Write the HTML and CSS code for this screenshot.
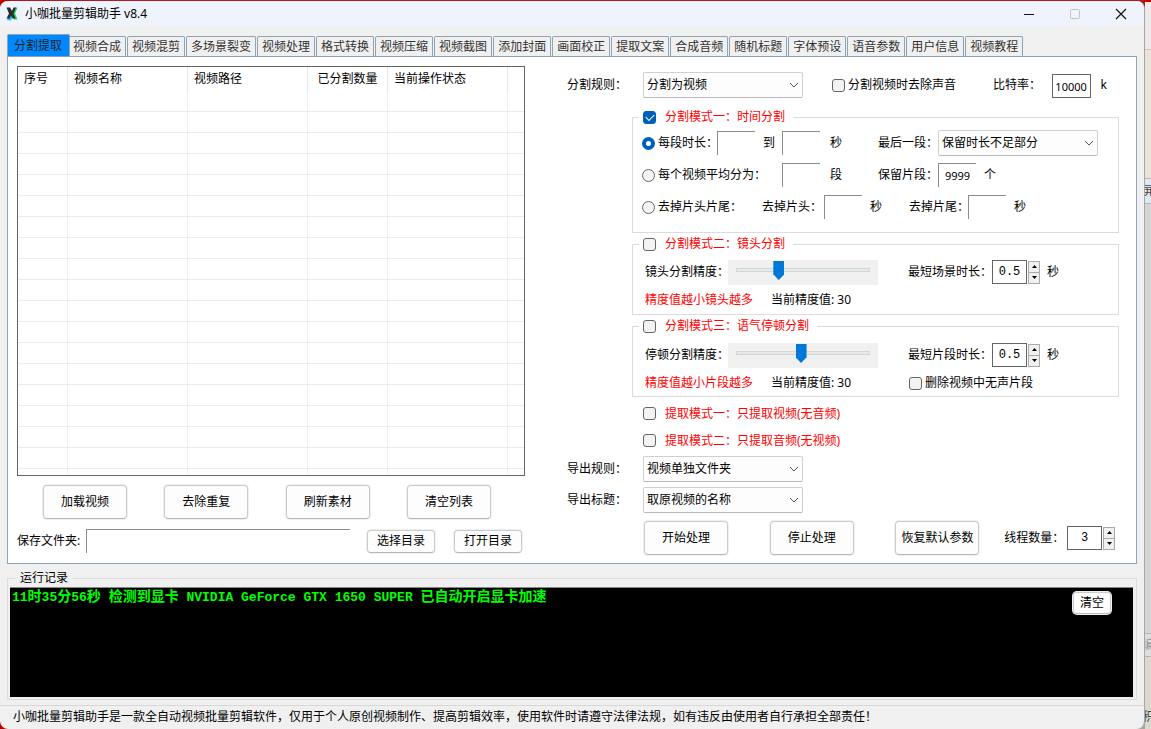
FILE: index.html
```html
<!DOCTYPE html>
<html lang="zh-CN">
<head>
<meta charset="utf-8">
<title>小咖批量剪辑助手 v8.4</title>
<link rel="stylesheet" href="styles.css">
</head>
<body>
<main class="window">
  <header class="titlebar">
    <svg class="app-icon" width="12" height="14" viewBox="0 0 12 14" aria-hidden="true">
      <path d="M9.500 0.500H11.500L9 6.500L11.500 12.500H8L6.500 8Z" fill="#1fd655"/>
      <path d="M1 13L3.500 9H6.500L5 13.500Z" fill="#19bdf2"/>
      <path d="M0.500 0.500H4L6 4L7.500 0.500H10L7.500 6.500L9.500 11.500H6.500L5 8.500L3.500 11.500H0.500L3 6.500Z" fill="#2a2d31"/>
    </svg>
    <h1 class="title">小咖批量剪辑助手 v8.4</h1>
    <button class="win-btn" aria-label="最小化"><svg width="12" height="12" viewBox="0 0 12 12"><path d="M1 6.500H11" stroke="#111"/></svg></button>
    <button class="win-btn" aria-label="最大化" disabled><svg width="12" height="12" viewBox="0 0 12 12"><rect x="1.500" y="1.500" width="9" height="9" rx="1" fill="none" stroke="#c0c3c9"/></svg></button>
    <button class="win-btn" aria-label="关闭"><svg width="12" height="12" viewBox="0 0 12 12"><path d="M1 1L11 11M11 1L1 11" stroke="#111" stroke-width="1.200"/></svg></button>
  </header>

  <nav class="tabs" role="tablist">
    <button class="tab tab-active" role="tab" aria-selected="true">分割提取</button>
    <button class="tab" role="tab">视频合成</button>
    <button class="tab" role="tab">视频混剪</button>
    <button class="tab" role="tab">多场景裂变</button>
    <button class="tab" role="tab">视频处理</button>
    <button class="tab" role="tab">格式转换</button>
    <button class="tab" role="tab">视频压缩</button>
    <button class="tab" role="tab">视频截图</button>
    <button class="tab" role="tab">添加封面</button>
    <button class="tab" role="tab">画面校正</button>
    <button class="tab" role="tab">提取文案</button>
    <button class="tab" role="tab">合成音频</button>
    <button class="tab" role="tab">随机标题</button>
    <button class="tab" role="tab">字体预设</button>
    <button class="tab" role="tab">语音参数</button>
    <button class="tab" role="tab">用户信息</button>
    <button class="tab" role="tab">视频教程</button>
  </nav>

  <section class="panel">
    <div class="left">
      <div class="list">
        <table class="files">
          <colgroup><col class="c-no"><col class="c-name"><col class="c-name"><col class="c-count"><col class="c-name"><col></colgroup>
          <thead><tr><th>序号</th><th>视频名称</th><th>视频路径</th><th class="center">已分割数量</th><th>当前操作状态</th><th></th></tr></thead>
          <tbody>
            <tr><td></td><td></td><td></td><td></td><td></td><td></td></tr>
            <tr><td></td><td></td><td></td><td></td><td></td><td></td></tr>
            <tr><td></td><td></td><td></td><td></td><td></td><td></td></tr>
            <tr><td></td><td></td><td></td><td></td><td></td><td></td></tr>
            <tr><td></td><td></td><td></td><td></td><td></td><td></td></tr>
            <tr><td></td><td></td><td></td><td></td><td></td><td></td></tr>
            <tr><td></td><td></td><td></td><td></td><td></td><td></td></tr>
            <tr><td></td><td></td><td></td><td></td><td></td><td></td></tr>
            <tr><td></td><td></td><td></td><td></td><td></td><td></td></tr>
            <tr><td></td><td></td><td></td><td></td><td></td><td></td></tr>
            <tr><td></td><td></td><td></td><td></td><td></td><td></td></tr>
            <tr><td></td><td></td><td></td><td></td><td></td><td></td></tr>
            <tr><td></td><td></td><td></td><td></td><td></td><td></td></tr>
            <tr><td></td><td></td><td></td><td></td><td></td><td></td></tr>
            <tr><td></td><td></td><td></td><td></td><td></td><td></td></tr>
            <tr><td></td><td></td><td></td><td></td><td></td><td></td></tr>
            <tr><td></td><td></td><td></td><td></td><td></td><td></td></tr>
            <tr><td></td><td></td><td></td><td></td><td></td><td></td></tr>
            <tr class="tail"><td></td><td></td><td></td><td></td><td></td><td></td></tr>
          </tbody>
        </table>
      </div>
      <div class="list-actions">
        <button class="btn btn-big">加载视频</button>
        <button class="btn btn-big">去除重复</button>
        <button class="btn btn-big">刷新素材</button>
        <button class="btn btn-big">清空列表</button>
      </div>
      <div class="folder">
        <label for="folder">保存文件夹:</label>
        <input class="edge folder-path" id="folder" type="text">
        <button class="btn btn-small">选择目录</button>
        <button class="btn btn-small">打开目录</button>
      </div>
    </div>

    <div class="right">
      <div class="form-row">
        <label for="split-rule">分割规则：</label>
        <div class="rule-fields">
          <span class="combo"><select id="split-rule"><option>分割为视频</option></select><svg width="10" height="6" viewBox="0 0 10 6"><path d="M1 1L5 5L9 1"/></svg></span>
          <label class="choice"><input type="checkbox">分割视频时去除声音</label>
          <span class="bitrate"><label for="bitrate">比特率：</label><input class="boxed" id="bitrate" type="text" value="10000"><span>k</span></span>
        </div>
      </div>

      <fieldset class="group group-time">
        <legend><label class="choice-wide"><input type="checkbox" checked>分割模式一：时间分割</label></legend>
        <div class="row pair">
          <div class="time-cells">
            <label class="choice"><input type="radio" name="mode" checked>每段时长：</label>
            <input class="edge" type="text" aria-label="最短时长">
            <input class="edge third" type="text" aria-label="最长时长">
            <span class="between">到</span>
            <span class="unit">秒</span>
          </div>
          <div class="field"><label for="last">最后一段：</label><span class="combo"><select id="last"><option>保留时长不足部分</option></select><svg width="10" height="6" viewBox="0 0 10 6"><path d="M1 1L5 5L9 1"/></svg></span></div>
        </div>
        <div class="row pair">
          <div class="time-cells">
            <label class="choice wide"><input type="radio" name="mode">每个视频平均分为：</label>
            <input class="edge third" type="text" aria-label="平均段数">
            <span class="unit">段</span>
          </div>
          <div class="field"><label for="keep">保留片段：</label><input class="edge" id="keep" type="text" value="9999"><span class="after">个</span></div>
        </div>
        <div class="row trim">
          <label class="choice"><input type="radio" name="mode">去掉片头片尾：</label>
          <label for="head">去掉片头：</label><input class="edge" id="head" type="text"><span class="after">秒</span>
          <label for="end">去掉片尾：</label><input class="edge" id="end" type="text"><span class="after">秒</span>
        </div>
      </fieldset>

      <fieldset class="group group-shot">
        <legend><label class="choice-wide"><input type="checkbox">分割模式二：镜头分割</label></legend>
        <div class="row tuning">
          <label for="shot">镜头分割精度：</label>
          <input id="shot" type="range" min="0" max="100" value="30">
          <div class="duration"><label for="scene">最短场景时长：</label><span class="spin"><input class="boxed" id="scene" type="text" value="0.5"><span class="arrows"><button aria-label="增加"><svg width="5" height="3" viewBox="0 0 5 3"><path d="M0 3L2.500 0L5 3Z"/></svg></button><button aria-label="减少"><svg width="5" height="3" viewBox="0 0 5 3"><path d="M0 0L2.500 3L5 0Z"/></svg></button></span></span><span>秒</span></div>
        </div>
        <div class="row notes"><span class="red">精度值越小镜头越多</span><output for="shot">当前精度值: 30</output></div>
      </fieldset>

      <fieldset class="group group-pause">
        <legend><label class="choice-wide"><input type="checkbox">分割模式三：语气停顿分割</label></legend>
        <div class="row tuning">
          <label for="pause">停顿分割精度：</label>
          <input id="pause" type="range" min="0" max="62" value="30">
          <div class="duration"><label for="clip">最短片段时长：</label><span class="spin"><input class="boxed" id="clip" type="text" value="0.5"><span class="arrows"><button aria-label="增加"><svg width="5" height="3" viewBox="0 0 5 3"><path d="M0 3L2.500 0L5 3Z"/></svg></button><button aria-label="减少"><svg width="5" height="3" viewBox="0 0 5 3"><path d="M0 0L2.500 3L5 0Z"/></svg></button></span></span><span>秒</span></div>
        </div>
        <div class="row notes"><span class="red">精度值越小片段越多</span><output for="pause">当前精度值: 30</output><label class="choice"><input type="checkbox">删除视频中无声片段</label></div>
      </fieldset>

      <div class="extract">
        <label class="choice-wide"><input type="checkbox">提取模式一：只提取视频(无音频)</label>
        <label class="choice-wide"><input type="checkbox">提取模式二：只提取音频(无视频)</label>
      </div>
      <div class="exports">
        <div class="form-row">
          <label for="export-rule">导出规则：</label>
          <span class="combo"><select id="export-rule"><option>视频单独文件夹</option></select><svg width="10" height="6" viewBox="0 0 10 6"><path d="M1 1L5 5L9 1"/></svg></span>
        </div>
        <div class="form-row">
          <label for="export-title">导出标题：</label>
          <span class="combo"><select id="export-title"><option>取原视频的名称</option></select><svg width="10" height="6" viewBox="0 0 10 6"><path d="M1 1L5 5L9 1"/></svg></span>
        </div>
      </div>
      <div class="actions">
        <button class="btn btn-big">开始处理</button>
        <button class="btn btn-big">停止处理</button>
        <button class="btn btn-big">恢复默认参数</button>
        <div class="threads"><label for="threads">线程数量：</label><span class="spin"><input class="boxed" id="threads" type="text" value="3"><span class="arrows"><button aria-label="增加"><svg width="5" height="3" viewBox="0 0 5 3"><path d="M0 3L2.500 0L5 3Z"/></svg></button><button aria-label="减少"><svg width="5" height="3" viewBox="0 0 5 3"><path d="M0 0L2.500 3L5 0Z"/></svg></button></span></span></div>
      </div>
    </div>
  </section>

  <fieldset class="log-group">
    <legend>运行记录</legend>
    <div class="log">
      <p class="log-line"><span class="mono">11</span>时<span class="mono">35</span>分<span class="mono">56</span>秒<span class="mono"> </span>检测到显卡<span class="mono"> NVIDIA GeForce GTX 1650 SUPER </span>已自动开启显卡加速</p>
      <button class="btn btn-clear">清空</button>
    </div>
  </fieldset>
  <footer class="status">小咖批量剪辑助手是一款全自动视频批量剪辑软件，仅用于个人原创视频制作、提高剪辑效率，使用软件时请遵守法律法规，如有违反由使用者自行承担全部责任！</footer>
</main>
<aside class="backdrop" aria-hidden="true">
  <div class="strip strip-top"></div>
  <div class="strip strip-paper"></div>
  <div class="strip strip-tool">屏</div>
  <div class="strip strip-gray"></div>
  <div class="strip strip-edit">编</div>
  <div class="strip strip-end">积</div>
</aside>
</body>
</html>
```
FILE: styles.css
```css
* { box-sizing: border-box; }

body {
  margin: 0;
  min-height: 100vh;
  display: flex;
  background: linear-gradient(to right, #b80000 10px, transparent 10px), linear-gradient(#b01822 8px, #aaa49f 8px);
  font: 12px/16px "Noto Sans", "Noto Sans CJK SC", sans-serif;
  color: #000;
}

button, input, select { font: inherit; color: inherit; margin: 0; }
label, button, legend, th, output { white-space: nowrap; }

.window {
  flex: 1;
  min-width: 0;
  display: flex;
  flex-direction: column;
  margin: 1px 0 2px;
  background: #f0f0f0;
  border-radius: 8px;
  overflow: hidden;
  border-right: 1px solid #a6a6a8;
}

/* Title bar */
.titlebar {
  display: flex;
  align-items: center;
  height: 25px;
  padding-left: 6px;
  background: #eff3fb;
}
.title { flex: 1; margin: 0 0 0 7px; font-size: 12px; font-weight: 400; }
.win-btn {
  width: 46px;
  height: 25px;
  padding: 0;
  border: 0;
  background: none;
  display: grid;
  place-items: center;
}

/* Tabs */
.tabs { display: flex; align-items: flex-end; gap: 1px; padding: 8px 7px 0; height: 30px; }
.tab {
  height: 20px;
  padding: 0 4px;
  border: 1px solid #8fa5b5;
  border-bottom: 0;
  border-radius: 2px 2px 0 0;
  background: #f0f0f0;
  color: #333;
  line-height: 18px;
}
.tab-active {
  height: 22px;
  padding: 0 7px 0 6px;
  margin-right: -3px;
  background: #0088ff;
  color: #222;
  z-index: 1;
}

.panel {
  flex: 1;
  display: grid;
  grid-template-columns: 508fr 552fr;
  gap: 42px;
  margin: 0 7px;
  padding: 9px 17px 8px 9px;
  border: 1px solid #8fa5b5;
  background: #fff;
}

/* File list */
.left { display: flex; flex-direction: column; min-width: 0; }
.list { flex: 1; border: 1px solid #646464; overflow: hidden; }
.files { width: 100%; table-layout: fixed; border-collapse: separate; border-spacing: 0; }
.c-no { width: 50px; }
.c-name { width: 120px; }
.c-count { width: 80px; }
.files th { height: 24px; padding: 0 0 0 6px; border-right: 1px solid #e5e5e5; font-weight: 400; text-align: left; }
.files .center { padding: 0; text-align: center; }
.files td { height: 21px; padding: 0; border-right: 1px solid #f0f0f0; border-bottom: 1px solid #ececec; }
.files th:last-child, .files td:last-child { border-right: 0; }
.files .tail td { height: 6px; border-bottom: 0; }

.list-actions { display: flex; justify-content: space-between; padding: 9px 34px 0 26px; }
.folder { display: flex; align-items: center; padding: 10px 3px 2px 0; }
.folder-path { flex: 1; min-width: 0; margin: 0 17px 0 4px; }
.folder .folder-path { margin-left: 6px; }
.folder .btn + .btn { margin-left: 19px; }

.btn {
  padding: 0;
  border: 1px solid #ccc;
  border-bottom-color: #b8b8b8;
  border-radius: 4px;
  background: #fdfdfd;
  box-shadow: 0 0 0 1px #efefef;
}
.btn-big { width: 84px; height: 34px; }
.btn-small { width: 68px; height: 23px; }

/* Text boxes */
.edge {
  width: 38px;
  height: 24px;
  padding: 0;
  border: solid #8c8c8c;
  border-width: 1px 0 0 1px;
  background: #fff;
  text-align: center;
  font-size: 11px;
}
.edge.folder-path { text-align: left; width: auto; }
.boxed { width: 39px; height: 24px; padding: 0; border: 1px solid #646464; background: #fff; text-align: center; font-size: 11px; }

/* Drop-downs */
.combo { position: relative; display: block; width: 160px; }
.combo select {
  display: block;
  width: 100%;
  height: 26px;
  padding: 0 20px 0 3px;
  appearance: none;
  border: 1px solid #d0d0d0;
  border-bottom-color: #b8b8b8;
  border-radius: 2px;
  background: #fdfdfd;
}
.combo svg { position: absolute; right: 4px; top: 10px; fill: none; stroke: #555; pointer-events: none; }

/* Check boxes and radios */
.choice, .choice-wide { display: flex; align-items: center; gap: 3px; }
.choice-wide { gap: 9px; color: #f00; }
input[type="checkbox"], input[type="radio"] {
  appearance: none;
  flex: none;
  width: 13px;
  height: 13px;
  border: 1px solid #666;
  border-radius: 3px;
  background: #f3f3f3;
}
input[type="radio"] { border-radius: 50%; }
input[type="radio"]:checked { border: 4px solid #005fb8; background: #fff; }
input[type="checkbox"]:checked { border-color: #005fb8; background: #005fb8; display: grid; place-items: center; }
input[type="checkbox"]:checked::after {
  content: "";
  width: 7px;
  height: 4px;
  border: solid #fff;
  border-width: 0 0 1px 1px;
  transform: rotate(-45deg);
  margin-bottom: 2px;
}

/* Sliders */
input[type="range"] {
  appearance: none;
  width: 100%;
  height: 25px;
  padding: 0 8px 4px;
  background: #f0f0f0;
}
input[type="range"]::-webkit-slider-runnable-track { height: 4px; border: 1px solid #d3d6d6; background: #e7eaea; }
input[type="range"]::-webkit-slider-thumb {
  appearance: none;
  width: 11px;
  height: 19px;
  margin-top: -8px;
  background: #0078d7;
  clip-path: polygon(0 0, 100% 0, 100% 70%, 50% 100%, 0 70%);
}

/* Spin boxes */
.spin { display: flex; align-items: center; gap: 1px; }
.spin .boxed { width: 35px; font-family: "Liberation Mono", monospace; font-size: 12px; }
.arrows { display: grid; width: 12px; border: 1px solid #aaa; }
.arrows button { height: 10px; padding: 0; border: 0; background: #f0f0f0; display: grid; place-items: center; }
.arrows button + button { height: 11px; border-top: 1px solid #aaa; }

/* Settings */
.right { display: flex; flex-direction: column; min-width: 0; padding-top: 6px; }
.form-row { display: grid; grid-template-columns: 76px 1fr; align-items: center; }
.rule-fields { display: grid; grid-template-columns: 189fr 161fr 126fr; align-items: center; }
.bitrate { display: flex; align-items: center; }
.bitrate .boxed { margin: 2px 10px 0 auto; }
.bitrate span { margin-right: 12px; }

.group { min-width: 0; margin: 0 0 2px 65px; padding: 0 9px; border: 1px solid #dcdcdc; }
.group legend { margin-left: -3px; padding: 0 8px 0 4px; height: 18px; }
.group legend label { height: 18px; }
.row { display: grid; align-items: center; }

.group-time { margin-top: 10px; padding-bottom: 9px; }
.group-time .row { height: 32px; }
.group-time legend + .row { margin-top: 1px; }
.pair { grid-template-columns: 236fr 231fr; }
.time-cells { display: grid; grid-template-columns: 75px 46px 19px 48px 1fr; align-items: center; }
.time-cells > * { grid-row: 1; }
.third { grid-column: 4; }
.between { grid-column: 3; }
.unit { grid-column: 5; }
.wide { grid-column: 1 / span 3; }
.field { display: flex; align-items: center; }
.after { margin-left: 8px; }
.trim { grid-template-columns: 120px 62px 38px 47px 59px 38px 1fr; }

.group-shot, .group-pause { padding-left: 12px; }
.group-shot legend, .group-pause legend { margin-left: -6px; }
.tuning { grid-template-columns: 83px 150px 1fr; height: 38px; }
.duration { display: flex; align-items: center; gap: 7px; padding-left: 30px; }
.duration label { width: 77px; }
.notes { grid-template-columns: 126px 138px 1fr; height: 18px; }
.red { color: #f00; }
.group-shot { padding-bottom: 5px; }
.group-pause { padding-bottom: 8px; }
.group-pause .tuning { height: 40px; }
.group-pause .notes { height: 13px; }

.extract { display: grid; margin: 1px 0 2px 76px; }
.extract label { height: 27px; }
.exports { display: grid; gap: 5px; }
.actions { display: grid; grid-template-columns: 126fr 126fr 109fr 115fr; align-items: center; margin: 8px 0 0 77px; }
.threads { display: flex; align-items: center; justify-content: space-between; padding-right: 4px; }

/* Log */
.log-group { min-width: 0; margin: 6px 7px 0; padding: 0 3px 2px 2px; border: 1px solid #dcdcdc; }
.log-group legend { margin-left: 5px; padding: 0 5px; height: 16px; }
.log { position: relative; height: 110px; background: #000; border-top: 1px solid #808a80; margin-top: 1px; }
.log-line { margin: 0; padding: 0 2px; font-size: 14px; font-weight: 700; color: #0f0; white-space: pre-wrap; }
.mono { font-family: "Liberation Mono", monospace; font-size: 13px; }
.btn-clear { position: absolute; top: 4px; right: 22px; width: 38px; height: 22px; }

.status { margin-top: 5px; padding: 3px 13px 4px; border-top: 1px solid #d7d7d7; white-space: nowrap; }

/* Sliver of the desktop behind the window */
.backdrop { flex: none; width: 6px; display: flex; flex-direction: column; background: #d8d8d8; overflow: hidden; color: #444; }
.strip { display: flex; align-items: center; justify-content: center; border-bottom: 1px solid #b5b5b5; min-height: 0; }
.strip-top { flex: 48; border-top: 2px solid #c00000; border-bottom-color: #edb8b8; background: #eeeaea; }
.strip-paper { flex: 130; background: #e9e4da; }
.strip-tool { flex: 24; background: #e1e8ef; }
.strip-gray { flex: 436; background: #d5d5d6; }
.strip-edit { flex: 22; background: #dedede; color: #999; }
.strip-end { flex: 69; background: #ddd8cc; align-items: flex-end; border-bottom-width: 6px; border-bottom-color: #ddd8cc; }
```
